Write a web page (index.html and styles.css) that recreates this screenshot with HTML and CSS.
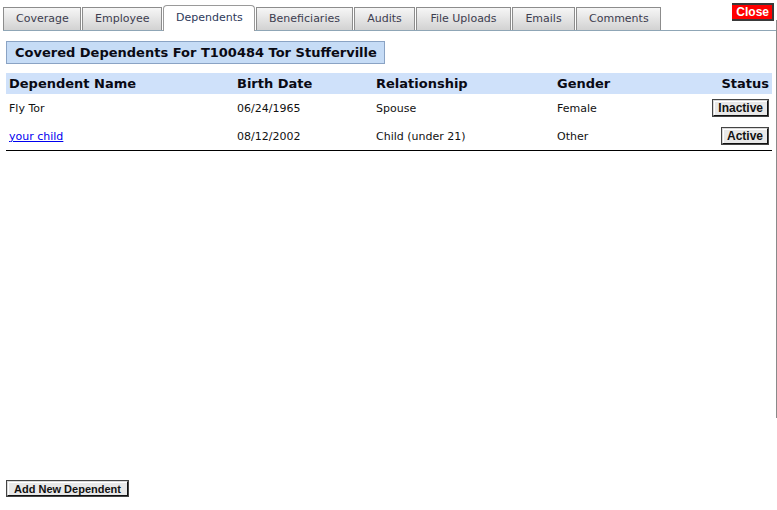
FILE: index.html
```html
<!DOCTYPE html>
<html>
<head>
<meta charset="utf-8">
<link rel="stylesheet" href="styles.css">
</head>
<body>
<div class="frame">
  <div class="topbar">
    <ul class="tabs">
      <li class="tab">Coverage</li>
      <li class="tab">Employee</li>
      <li class="tab active">Dependents</li>
      <li class="tab">Beneficiaries</li>
      <li class="tab">Audits</li>
      <li class="tab">File Uploads</li>
      <li class="tab">Emails</li>
      <li class="tab">Comments</li>
    </ul>
    <button class="close">Close</button>
  </div>
  <div class="panel">
    <div class="title">Covered Dependents For T100484 Tor Stufferville</div>
    <table class="deps">
      <thead>
        <tr>
          <th class="c-name">Dependent Name</th>
          <th class="c-birth">Birth Date</th>
          <th class="c-rel">Relationship</th>
          <th class="c-gender">Gender</th>
          <th class="c-status">Status</th>
        </tr>
      </thead>
      <tbody>
        <tr>
          <td>Fly Tor</td>
          <td>06/24/1965</td>
          <td>Spouse</td>
          <td>Female</td>
          <td class="c-status"><button class="btn">Inactive</button></td>
        </tr>
        <tr>
          <td><a href="#" class="link">your child</a></td>
          <td>08/12/2002</td>
          <td>Child (under 21)</td>
          <td>Other</td>
          <td class="c-status"><button class="btn">Active</button></td>
        </tr>
      </tbody>
    </table>
    <div class="spacer"></div>
    <button class="btn add">Add New Dependent</button>
  </div>
</div>
</body>
</html>
```
FILE: styles.css
```css
html, body {
  margin: 0;
  padding: 0;
  background: #fff;
}
body {
  font-family: "DejaVu Sans", Verdana, sans-serif;
  font-size: 11px;
  color: #111;
  width: 777px;
  height: 510px;
  overflow: hidden;
}
.frame {
  position: relative;
  height: 510px;
  display: flex;
  flex-direction: column;
}
.frame::after {
  content: "";
  position: absolute;
  right: 0;
  top: 20px;
  height: 398px;
  width: 1px;
  background: #8a8a8a;
}
.topbar {
  display: flex;
  align-items: flex-start;
  justify-content: space-between;
  padding: 3px 3px 0 3px;
}
.tabs {
  list-style: none;
  margin: 0;
  padding: 0;
  display: flex;
  align-items: flex-end;
  flex: 1;
  border-bottom: 1px solid #8fa6b6;
  height: 27px;
  margin-right: -44px;
}
.tab {
  line-height: 22px;
  padding: 0 12px;
  border: 1px solid #8c8c8c;
  border-bottom: none;
  margin-right: 1px;
  background: linear-gradient(#f6f6f6, #d2d2d2);
  color: #3d3d4f;
  font-size: 11px;
  text-align: center;
  box-sizing: border-box;
  height: 23px;
}
.tab:nth-child(1) { width: 78px; }
.tab:nth-child(2) { width: 80px; }
.tab:nth-child(3) { width: 92px; }
.tab:nth-child(4) { width: 97px; }
.tab:nth-child(5) { width: 61px; }
.tab:nth-child(6) { width: 95px; }
.tab:nth-child(7) { width: 63px; }
.tab:nth-child(8) { width: 85px; }
.tab.active {
  background: #fff;
  border-radius: 4px 4px 0 0;
  border-color: #9a9a9a;
  margin-bottom: -1px;
  height: 26px;
  line-height: 24px;
  color: #2d3a5a;
}
.close {
  margin: 0;
  padding: 0 3px 1px 4px;
  height: 18px;
  background: #ff0000;
  color: #fff;
  font-family: "Liberation Sans", Arial, sans-serif;
  font-weight: bold;
  font-size: 12px;
  border: 2px solid #3a3a3a;
  border-left: 0;
  position: relative;
  z-index: 1;
}
.panel {
  padding: 10px 5px 0 6px;
  display: flex;
  flex-direction: column;
  flex: 1;
  align-items: flex-start;
}
.title {
  background: #c6dcf6;
  border: 1px solid #8aa3c4;
  font-weight: bold;
  font-size: 13px;
  padding: 3px 7px 3px 8px;
  height: 15px;
  line-height: 15px;
  color: #0a0a14;
}
.deps {
  margin-top: 9px;
  width: 766px;
  border-collapse: collapse;
  border-bottom: 1px solid #000;
}
.deps th {
  background: #cfe1fa;
  font-size: 13px;
  font-weight: bold;
  text-align: left;
  height: 21px;
  padding: 0 3px;
  color: #0a0a14;
}
.deps td {
  height: 28px;
  padding: 0 3px;
  font-size: 11px;
}
.c-name { width: 222px; }
.c-birth { width: 133px; }
.c-rel { width: 175px; }
.c-gender { width: 120px; }
.deps .c-status { text-align: right; }
.link { color: #0000ee; }
.btn {
  font-family: "Liberation Sans", Arial, sans-serif;
  font-weight: bold;
  font-size: 12px;
  color: #111;
  background: #e8e8e8;
  border: 2px solid;
  border-color: #d9d9d9 #111 #111 #d9d9d9;
  box-shadow: inset 1px 1px 0 #fff;
  outline: 1px solid #444;
  outline-offset: -1px;
  padding: 0 4px;
  height: 18px;
  margin: 0;
}
.spacer { flex: 1; }
.add {
  height: 17px;
  font-size: 11px;
  padding: 0 6px;
  margin-bottom: 13px;
}
```
